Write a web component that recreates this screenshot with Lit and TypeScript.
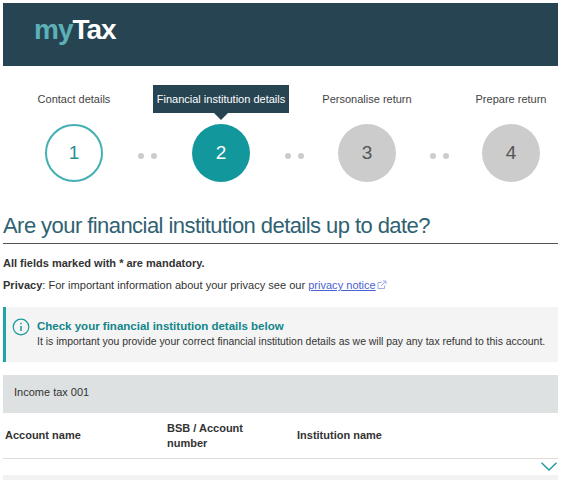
import { LitElement, html, css, TemplateResult, CSSResult } from 'lit';
import { customElement } from 'lit/decorators.js';

const STEPS = [
  { label: 'Contact details', state: 'done' },
  { label: 'Financial institution details', state: 'active' },
  { label: 'Personalise return', state: 'todo' },
  { label: 'Prepare return', state: 'todo' },
];

@customElement('app-root')
export class AppRoot extends LitElement {
  renderStep(step: { label: string; state: string }, i: number): TemplateResult {
    return html`
      ${i > 0
        ? html`<div class="dots"><span></span><span></span></div>`
        : ''}
      <div class="step ${step.state}">
        <div class="label">${step.label}</div>
        <div class="circle">${i + 1}</div>
      </div>
    `;
  }

  render(): TemplateResult {
    return html`
      <header><span class="logo"><span class="my">my</span>Tax</span></header>
      <nav class="steps">${STEPS.map((s, i) => this.renderStep(s, i))}</nav>
      <h1>Are your financial institution details up to date?</h1>
      <p class="mandatory">All fields marked with * are mandatory.</p>
      <p class="privacy">
        <b>Privacy</b>: For important information about your privacy see our
        <a href="#">privacy notice</a><svg class="ext" width="10" height="10" viewBox="0 0 10 10" fill="none" stroke="#8fa3e0" stroke-width="0.9">
          <path d="M7.5 5.5V8.5H1V2.5H4.5" />
          <path d="M4 6L8.8 1.2M5.8 1H9V4.2" />
        </svg>
      </p>
      <section class="notice">
        <svg class="info" width="18" height="18" viewBox="0 0 18 18" fill="none" stroke="#1a9a9e">
          <circle cx="9" cy="9" r="7.8" stroke-width="1.2" />
          <path d="M9 8V13" stroke-width="1.5" />
          <path d="M9 4.8V6.3" stroke-width="1.5" />
        </svg>
        <div>
          <div class="notice-title">Check your financial institution details below</div>
          <div class="notice-body">
            It is important you provide your correct financial institution details as we will pay any tax refund to this account.
          </div>
        </div>
      </section>
      <div class="income">Income tax 001</div>
      <div class="cols">
        <div>Account name</div>
        <div>BSB / Account<br />number</div>
        <div>Institution name</div>
      </div>
      <div class="toggle">
        <svg width="16" height="9" viewBox="0 0 16 9" fill="none" stroke="#1a9a9e" stroke-width="1.4">
          <path d="M0.5 0.7L8 8L15.5 0.7" />
        </svg>
      </div>
      <div class="band"></div>
    `;
  }

  static get styles(): CSSResult {
    return css`
      :host {
        display: block;
        height: 480px;
        overflow: hidden;
        box-sizing: border-box;
        padding: 3px 5px 0 3px;
        background: #fff;
        color: #333;
        font-family: 'Liberation Sans', Arial, sans-serif;
        font-size: 11px;
      }
      header {
        height: 63px;
        background: #274452;
        box-sizing: border-box;
        padding: 9px 0 0 31px;
      }
      .logo {
        font-size: 28px;
        font-weight: 700;
        line-height: 36px;
        letter-spacing: -1px;
        color: #fff;
      }
      .my {
        color: #5cb1b8;
      }
      .steps {
        display: grid;
        grid-template-columns: 100px 47px 100px 46px 100px 44px 100px;
        margin: 19px 0 0 21px;
      }
      .step {
        display: flex;
        flex-direction: column;
        align-items: center;
      }
      .label {
        height: 28px;
        line-height: 28px;
        margin-bottom: 11px;
        white-space: nowrap;
        color: #444;
      }
      .active .label {
        position: relative;
        background: #274452;
        color: #fff;
        padding: 0 3.5px;
      }
      .active .label::after {
        content: '';
        position: absolute;
        left: 50%;
        bottom: -7px;
        margin-left: -7px;
        border-left: 7px solid transparent;
        border-right: 7px solid transparent;
        border-top: 7px solid #274452;
      }
      .circle {
        width: 58px;
        height: 58px;
        box-sizing: border-box;
        border-radius: 50%;
        display: flex;
        align-items: center;
        justify-content: center;
        font-size: 19px;
        background: #ccc;
        color: #555;
      }
      .done .circle {
        background: #fff;
        border: 2px solid #45b0b3;
        color: #2b8f93;
      }
      .active .circle {
        background: #12989c;
        color: #fff;
      }
      .dots {
        height: 58px;
        align-self: end;
        box-sizing: border-box;
        padding-top: 6px;
        display: flex;
        align-items: center;
        justify-content: center;
        gap: 7px;
      }
      .dots span {
        width: 6px;
        height: 6px;
        border-radius: 50%;
        background: #ccc;
      }
      h1 {
        margin: 30px 0 0;
        font-size: 22px;
        font-weight: 400;
        letter-spacing: -0.56px;
        line-height: 28px;
        padding-bottom: 3px;
        color: #2f6272;
        border-bottom: 1px solid #555;
      }
      p {
        margin: 0;
      }
      .mandatory {
        margin-top: 12px;
        font-weight: 700;
        line-height: 14px;
      }
      .privacy {
        margin-top: 8px;
        font-size: 11.05px;
        line-height: 14px;
      }
      .privacy a {
        color: #4a62cf;
      }
      .ext {
        margin-left: 1px;
        vertical-align: -1px;
      }
      .notice {
        margin-top: 15px;
        height: 55px;
        box-sizing: border-box;
        background: #f4f4f4;
        border-left: 3px solid #1fa5a8;
        display: flex;
        gap: 7px;
        padding: 11px 0 0 6px;
      }
      .info {
        flex: none;
      }
      .notice-title {
        font-size: 11.5px;
        font-weight: 700;
        color: #12868a;
        line-height: 16px;
      }
      .notice-body {
        font-size: 10.45px;
        line-height: 16px;
        white-space: nowrap;
      }
      .income {
        margin-top: 13px;
        height: 38px;
        line-height: 35px;
        padding-left: 11px;
        background: #dde1e2;
      }
      .cols {
        display: grid;
        grid-template-columns: 162px 130px 1fr;
        align-items: center;
        height: 45px;
        padding-left: 2px;
        font-weight: 700;
        line-height: 15px;
        border-bottom: 1px solid #ddd;
      }
      .toggle {
        display: flex;
        justify-content: flex-end;
        padding: 3px 1px 0 0;
        height: 13px;
      }
      .band {
        height: 6px;
        background: #f2f2f2;
      }
    `;
  }
}
